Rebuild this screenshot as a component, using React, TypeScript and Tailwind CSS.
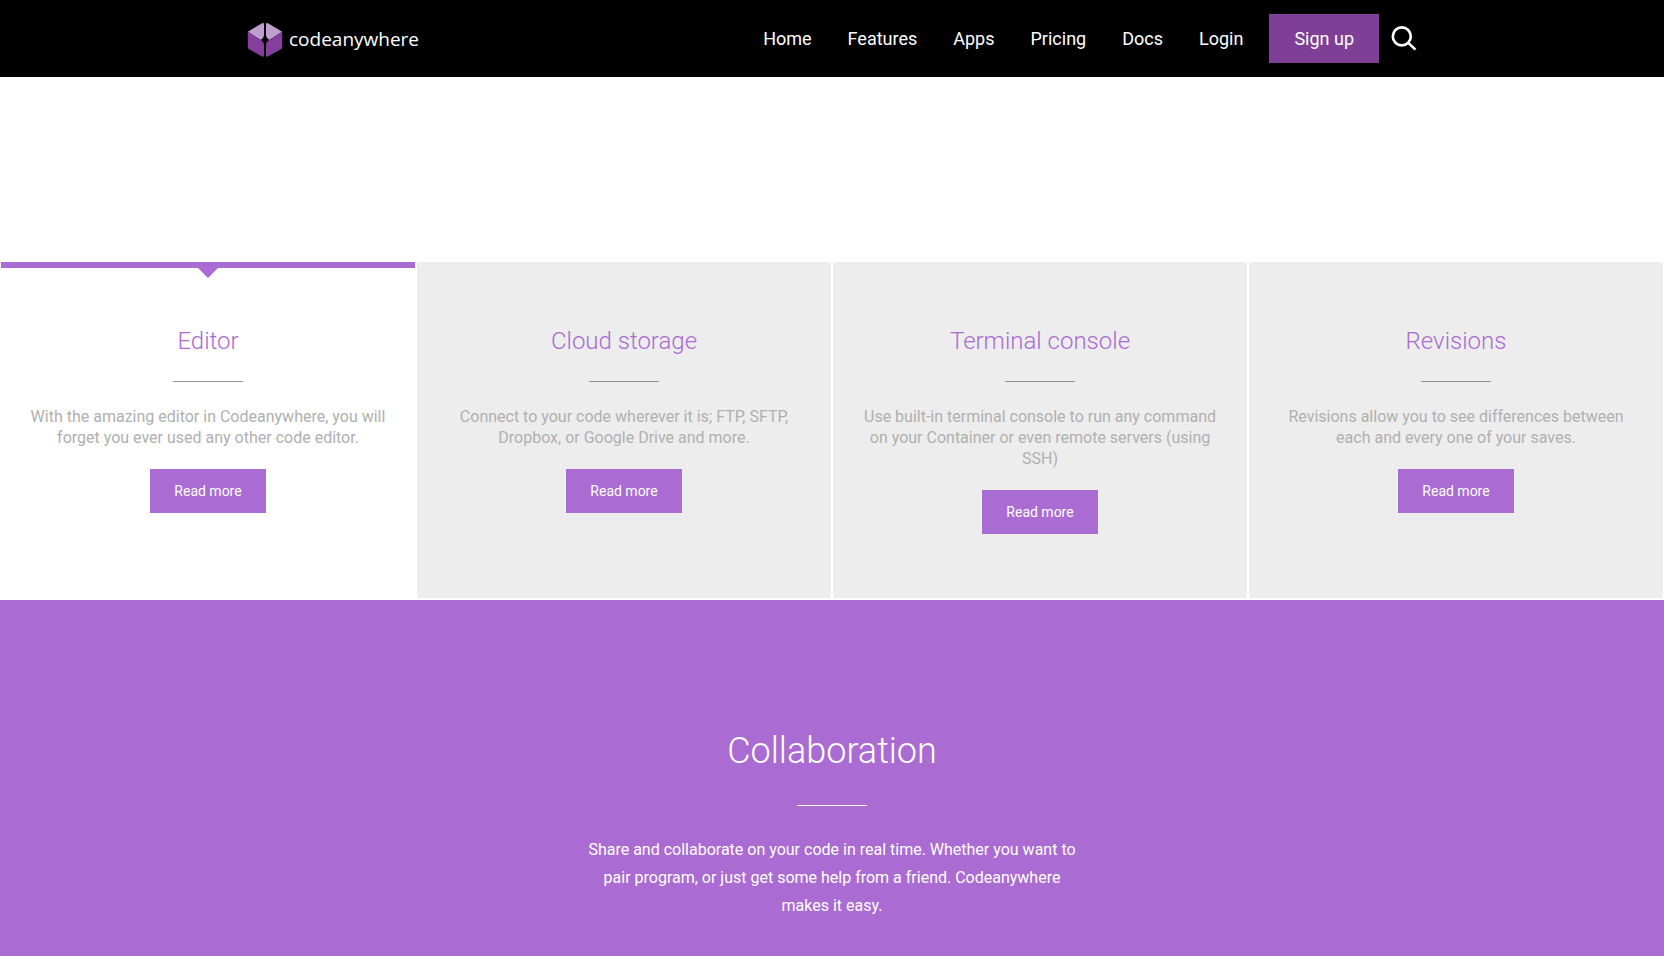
import { useState } from "react";

const navLinks = ["Home", "Features", "Apps", "Pricing", "Docs", "Login"];

const features = [
  {
    title: "Editor",
    text: "With the amazing editor in Codeanywhere, you will forget you ever used any other code editor.",
  },
  {
    title: "Cloud storage",
    text: "Connect to your code wherever it is; FTP, SFTP, Dropbox, or Google Drive and more.",
  },
  {
    title: "Terminal console",
    text: "Use built-in terminal console to run any command on your Container or even remote servers (using SSH)",
  },
  {
    title: "Revisions",
    text: "Revisions allow you to see differences between each and every one of your saves.",
  },
];

function Logo() {
  return (
    <a aria-label="codeanywhere" className="flex items-center gap-1.5" href="#">
      <svg aria-hidden="true" className="h-9 w-9" viewBox="0 0 36 36">
        <path
          d="M.8 10.800 15 2.200Q17 1.300 17 3.200V14.500Q16.500 17.300 13.800 19Z"
          fill="#bf9fcd"
        />
        <path
          d="M35.200 10.800 21 2.200Q19 1.300 19 3.200V14.500Q19.500 17.300 22.200 19Z"
          fill="#bf9fcd"
        />
        <path
          d="M.8 10.800 13.800 19Q16.500 20.400 17 23.200V34.500Q17 36.300 15.200 35.500L1.800 28Q.8 27.400 .8 26.200Z"
          fill="#843f9c"
        />
        <path
          d="M35.200 10.800 22.200 19Q19.500 20.400 19 23.200V34.500Q19 36.300 20.800 35.500L34.200 28Q35.200 27.400 35.200 26.200Z"
          fill="#843f9c"
        />
      </svg>
      <span className="font-['Open_Sans',sans-serif] text-[19px] leading-6 font-medium">
        codeanywhere
      </span>
    </a>
  );
}

function SearchIcon() {
  return (
    <svg
      aria-hidden="true"
      className="h-[26px] w-[26px]"
      fill="none"
      stroke="currentColor"
      strokeWidth="2.600"
      viewBox="0 0 26 26"
    >
      <circle cx="10.800" cy="10.400" r="9" />
      <path d="M17 16.600 24.500 23.600" />
    </svg>
  );
}

export default function App() {
  const [active, setActive] = useState(0);

  return (
    <div className="min-h-screen bg-white font-[Roboto,sans-serif]">
      <header className="bg-black text-white">
        <div className="mx-auto flex max-w-[1170px] items-center justify-between py-3.5">
          <Logo />
          <div className="flex items-center">
            <nav className="flex items-center">
              {navLinks.map((label) => (
                <a className="px-[18px] text-[18px] leading-6" href="#" key={label}>
                  {label}
                </a>
              ))}
              <a
                className="ml-2 bg-[#7f3f96] px-[25px] py-3 text-[18px] leading-[25px]"
                href="#"
              >
                Sign up
              </a>
            </nav>
            <button aria-label="Search" className="ml-3" type="button">
              <SearchIcon />
            </button>
          </div>
        </div>
      </header>

      <main>
        <section className="grid grid-cols-4 pt-[185px]">
          {features.map((feature, i) => (
            <article
              className={`relative mx-px mb-0.5 flex flex-col items-center px-7 pt-16 pb-16 text-center ${
                i === active ? "bg-white" : "bg-[#ededed]"
              }`}
              key={feature.title}
              onMouseEnter={() => setActive(i)}
            >
              {i === active && (
                <div className="absolute inset-x-0 top-0 flex flex-col items-center">
                  <div className="h-1.5 w-full bg-[#aa6bd2]" />
                  <div className="border-x-10 border-t-10 border-x-transparent border-t-[#aa6bd2]" />
                </div>
              )}
              <h2 className="text-[24px] leading-[30px] font-light text-[#aa6bd2]">
                {feature.title}
              </h2>
              <hr className="mt-[25px] w-[70px] border-[#949494]" />
              <p className="mt-6 text-[16px] leading-[21px] text-[#b0b0b0]">
                {feature.text}
              </p>
              <a
                className="mt-[21px] bg-[#aa6bd2] px-6 py-3 text-[14px] leading-5 text-white"
                href="#"
              >
                Read more
              </a>
            </article>
          ))}
        </section>

        <section className="bg-[#aa6bd2] px-8 pt-[127px] pb-28 text-center text-white">
          <h2 className="text-[36px] leading-[48px] font-light">Collaboration</h2>
          <hr className="mx-auto mt-[30px] w-[70px] border-white" />
          <p className="mx-auto mt-[30px] max-w-[500px] text-[16px] leading-7">
            Share and collaborate on your code in real time. Whether you want to
            pair program, or just get some help from a friend. Codeanywhere makes
            it easy.
          </p>
        </section>
      </main>
    </div>
  );
}
